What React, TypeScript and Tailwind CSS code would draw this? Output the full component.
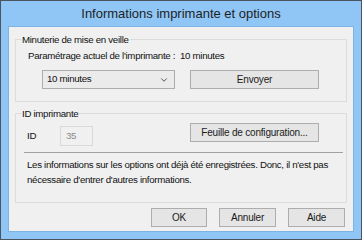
import { ChevronDown } from 'lucide-react';

const font = { fontFamily: '"Liberation Sans", Arial, sans-serif' };

function WinButton({ label, className = '' }: { label: string; className?: string }) {
  return (
    <button
      type="button"
      className={`h-[19px] flex items-center justify-center border border-[#adadad] bg-[#e5e5e5] text-[10px] tracking-[-0.2px] text-[#1a1a1a] leading-none ${className}`}
    >
      {label}
    </button>
  );
}

function GroupBox({ title, className = '', children }: { title: string; className?: string; children: React.ReactNode }) {
  return (
    <div className={`relative border border-[#dcdcdc] ${className}`}>
      <span className="absolute -top-[8px] left-[5px] bg-[#f0f0f0] px-[1px] leading-[15px]">
        {title}
      </span>
      {children}
    </div>
  );
}

export default function App() {
  return (
    <div
      style={font}
      className="w-[362px] h-[240px] flex flex-col bg-[#8fc6f6] border border-[#4a5560] px-[7px] pb-[7px]"
    >
      {/* Title bar */}
      <div className="h-[25px] flex items-center justify-center text-[13px] text-[#1e1e1e]">
        Informations imprimante et options
      </div>

      {/* Client area */}
      <div className="flex-1 flex flex-col bg-[#f0f0f0] border border-[#7fb4e2] px-[6px] pt-[12px] text-[9.7px] tracking-[-0.3px] text-[#111]">
        <GroupBox title="Minuterie de mise en veille" className="h-[63px] pt-[8px]">
          <div className="pl-[12px] leading-[15px]">
            Paramétrage actuel de l'imprimante :&nbsp; 10 minutes
          </div>
          <div className="flex items-center mt-[7px]">
            <div className="ml-[26px] w-[133px] h-[19px] flex items-center justify-between border border-[#adadad] bg-[#ebebeb] pl-[4px] pr-[5px]">
              <span>10 minutes</span>
              <ChevronDown size={10} strokeWidth={2.4} className="text-[#555]" />
            </div>
            <WinButton label="Envoyer" className="ml-[15px] w-[129px]" />
          </div>
        </GroupBox>

        <GroupBox title="ID imprimante" className="mt-[11px] h-[90px] pt-[9px]">
          <div className="flex items-start">
            <div className="flex items-center mt-[3px]">
              <span className="ml-[11px] w-[33px]">ID</span>
              <div className="w-[33px] h-[20px] flex items-center border border-[#d9d9d9] bg-[#f0f0f0] pl-[5px] text-[#8a8a8a]">
                35
              </div>
            </div>
            <WinButton label="Feuille de configuration..." className="ml-[97px] w-[129px]" />
          </div>
          <div className="ml-[8px] mr-[3px] mt-[6px] h-px bg-[#a0a0a0]" />
          <div className="pl-[11px] pr-[10px] mt-[4px] leading-[15px]">
            Les informations sur les options ont déjà été enregistrées. Donc, il n'est pas nécessaire d'entrer d'autres informations.
          </div>
        </GroupBox>

        <div className="flex justify-end gap-[12px] mt-[5px] pr-[2px]">
          <WinButton label="OK" className="w-[56px] border-[#3c9ae8]" />
          <WinButton label="Annuler" className="w-[57px]" />
          <WinButton label="Aide" className="w-[57px]" />
        </div>
      </div>
    </div>
  );
}
